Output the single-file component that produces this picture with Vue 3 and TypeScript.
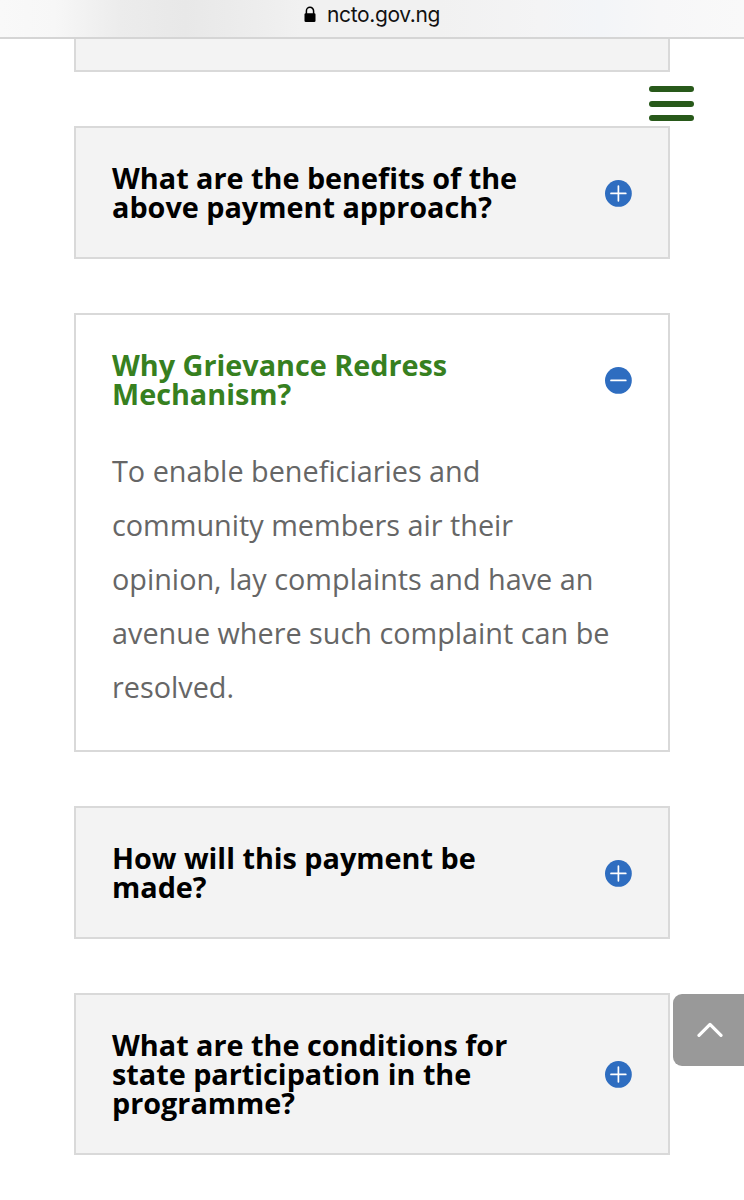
<script setup lang="ts">
import { ref } from 'vue'

interface Question {
  title: string[]
  answer: string[]
}

const questions: Question[] = [
  { title: ['What are the benefits of the', 'above payment approach?'], answer: [] },
  {
    title: ['Why Grievance Redress', 'Mechanism?'],
    answer: [
      'To enable beneficiaries and',
      'community members air their',
      'opinion, lay complaints and have an',
      'avenue where such complaint can be',
      'resolved.',
    ],
  },
  { title: ['How will this payment be', 'made?'], answer: [] },
  { title: ['What are the conditions for', 'state participation in the', 'programme?'], answer: [] },
]

const openIndex = ref(1)
</script>

<template>
  <div class="page">
    <header class="address-bar">
      <svg class="lock" width="12" height="17" viewBox="0 0 12 17">
        <path d="M2.4 8V4.9a3.6 3.6 0 0 1 7.2 0V8" fill="none" stroke="#000" stroke-width="1.5" />
        <rect x="0.5" y="7.3" width="11" height="8.8" rx="1.3" fill="#000" />
      </svg>
      <span class="host">ncto.gov.ng</span>
    </header>

    <main class="list">
      <section class="card cut"></section>
      <section
        v-for="(q, i) in questions"
        :key="i"
        class="card"
        :class="{ open: i === openIndex }"
      >
        <div class="head" @click="openIndex = i">
          <h5 class="title">
            <span v-for="line in q.title" :key="line" class="line">{{ line }}</span>
          </h5>
          <svg class="toggle" width="28" height="28" viewBox="0 0 28 28">
            <circle cx="14.4" cy="14.4" r="13.4" fill="#2e6dc0" />
            <path
              :d="i === openIndex ? 'M7 14.4H21.8' : 'M7 14.4H21.8M14.4 7V21.8'"
              stroke="#fff"
              stroke-width="1.7"
              stroke-linecap="round"
            />
          </svg>
        </div>
        <p v-if="i === openIndex" class="answer">
          <span v-for="line in q.answer" :key="line" class="line">{{ line }}</span>
        </p>
      </section>
    </main>

    <button class="menu" aria-label="Menu">
      <i></i><i></i><i></i>
    </button>
    <button class="to-top" aria-label="Back to top">
      <svg width="26" height="16" viewBox="0 0 26 16">
        <path d="M2 13.4L13 2.4L24 13.4" fill="none" stroke="#fff" stroke-width="3.2" stroke-linecap="round" stroke-linejoin="round" />
      </svg>
    </button>
  </div>
</template>

<style>
body {
  margin: 0;
  background: #fff;
}
</style>

<style scoped>
.page {
  position: relative;
  height: 1200px;
  overflow: hidden;
  background: #fff;
  font-family: 'Open Sans', 'Noto Sans', sans-serif;
}
.address-bar {
  box-sizing: border-box;
  height: 39px;
  border-bottom: 2px solid #d5d5d5;
  display: flex;
  justify-content: center;
  align-items: flex-start;
  gap: 11px;
  background: linear-gradient(90deg, #f9f9f9 0, #f7f7f7 55px, #ececec 120px, #e8e8e8 185px, #ededed 255px, #f1f1f1 300px, #f1f1f1 440px, #f4f4f5 540px, #f3f5f8 600px, #f7f7f8 660px, #f9f9f9 744px);
}
.lock {
  margin-top: 6px;
}
.host {
  font-family: Inter, 'Liberation Sans', sans-serif;
  font-size: 21px;
  line-height: 30px;
  letter-spacing: -0.36px;
  color: #111;
}
.list {
  display: flex;
  flex-direction: column;
  gap: 54px;
  margin: 0 74px;
}
.card {
  box-sizing: border-box;
  border: 2px solid #d9d9d9;
  background: #f3f3f3;
  padding: 35px 36px 36px;
}
.card.cut {
  height: 33px;
  padding: 0;
  border-top: 0;
}
.card.open {
  background: #fff;
}
.head {
  display: flex;
  align-items: center;
  justify-content: space-between;
}
.title {
  margin: 0;
  font-size: 28.8px;
  line-height: 29px;
  font-weight: 700;
  letter-spacing: -0.01px;
  color: #000;
}
.open .title {
  color: #37801f;
}
.line {
  display: block;
  white-space: nowrap;
}
.toggle {
  flex: none;
  margin-top: 1px;
}
.answer {
  margin: 36px 0 0;
  font-size: 28.8px;
  line-height: 54px;
  color: #666;
}
.menu {
  position: absolute;
  left: 648.5px;
  top: 86px;
  width: 45px;
  height: 35px;
  padding: 0;
  border: 0;
  background: none;
  display: flex;
  flex-direction: column;
  justify-content: space-between;
}
.menu i {
  width: 45px;
  height: 6px;
  border-radius: 3px;
  background: #28591a;
}
.to-top {
  position: absolute;
  right: 0;
  top: 994px;
  width: 71px;
  height: 72px;
  padding: 0 0 0 3px;
  border: 0;
  border-radius: 9px 0 0 9px;
  background: #999;
  display: flex;
  align-items: center;
  justify-content: center;
}
</style>
